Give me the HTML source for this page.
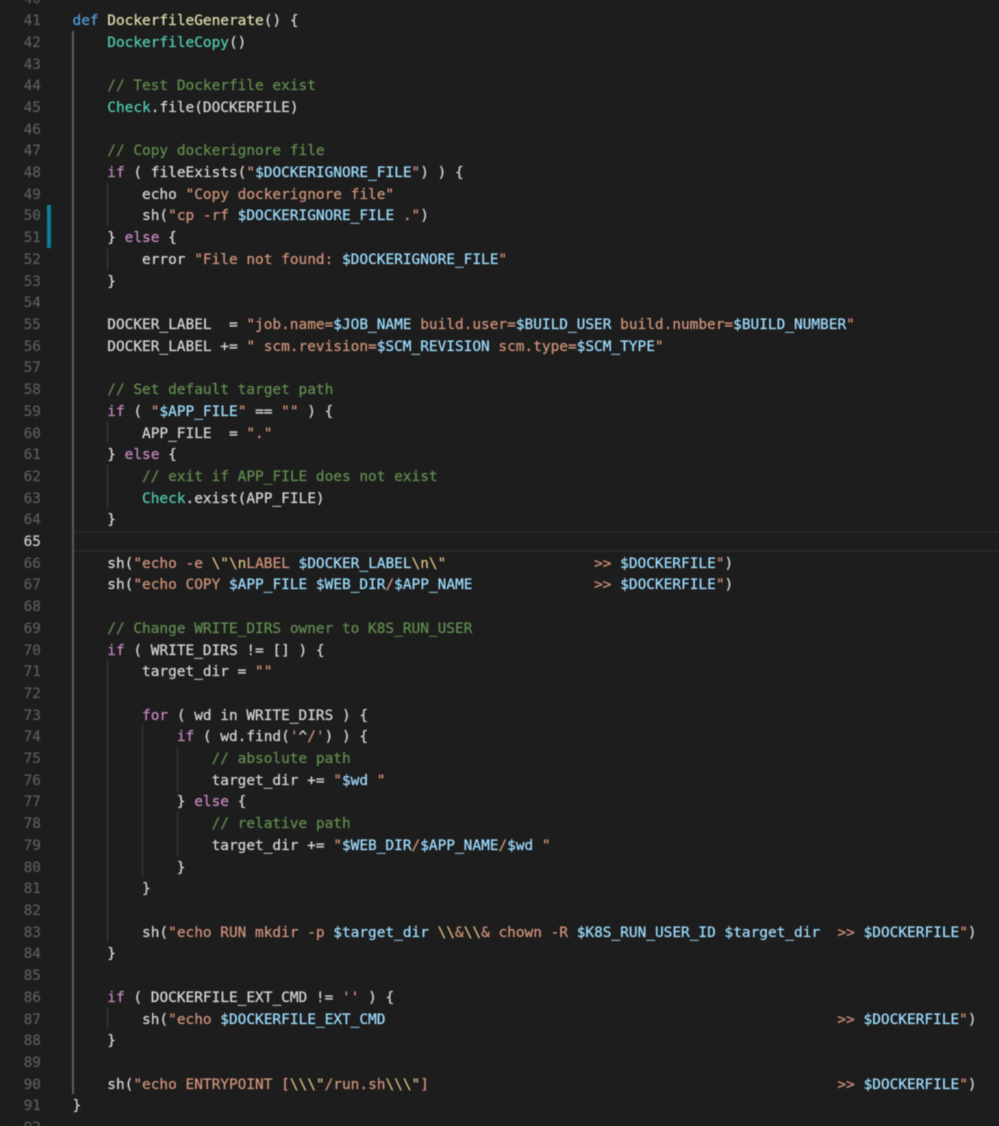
<!DOCTYPE html>
<html><head><meta charset="utf-8"><style>
html,body{margin:0;padding:0;background:#1d1d1d}
#e{position:relative;width:999px;height:1126px;overflow:hidden;background:#1d1d1d;filter:blur(.4px)}
pre{position:absolute;margin:0;font:14.45px/21.7px "DejaVu Sans Mono","Liberation Mono",monospace;top:-10.55px;font-variant-ligatures:none;-webkit-text-stroke:.25px}
#n{left:0;width:41px;text-align:right;color:#5a5a5a}
#n b{font-weight:normal;color:#c6c6c6}
#c{left:72.5px;color:#d4d4d4}
.g{position:absolute;width:1px;background:#404040}
.k{color:#569cd6}.p{color:#c586c0}.f{color:#dcdcaa}.t{color:#4ec9b0}.v{color:#9cdcfe}.s{color:#ce9178}.m{color:#608b4e}.x{color:#d7ba7d}
</style></head><body><div id="e">
<div style="position:absolute;left:74px;right:0;top:531px;height:21px;border-top:2px solid #272727;border-bottom:2px solid #272727;box-sizing:border-box"></div>
<div style="position:absolute;left:47px;top:205px;width:4px;height:43px;background:#0c7d9d"></div>
<div class="g" style="left:72px;top:31px;height:1063px;width:2px;background:#5c5c5c"></div>
<div class="g" style="left:107px;top:183px;height:43px"></div>
<div class="g" style="left:107px;top:248px;height:22px"></div>
<div class="g" style="left:107px;top:421px;height:22px"></div>
<div class="g" style="left:107px;top:465px;height:43px"></div>
<div class="g" style="left:107px;top:660px;height:282px"></div>
<div class="g" style="left:107px;top:1007px;height:22px"></div>
<div class="g" style="left:142px;top:725px;height:152px"></div>
<div class="g" style="left:177px;top:747px;height:44px"></div>
<div class="g" style="left:177px;top:812px;height:44px"></div>
<pre id="n">40
41
42
43
44
45
46
47
48
49
50
51
52
53
54
55
56
57
58
59
60
61
62
63
64
<b>65</b>
66
67
68
69
70
71
72
73
74
75
76
77
78
79
80
81
82
83
84
85
86
87
88
89
90
91
92</pre>
<pre id="c">

<span class="k">def</span> <span class="f">DockerfileGenerate</span>() {
    <span class="t">DockerfileCopy</span>()

    <span class="m">// Test Dockerfile exist</span>
    <span class="t">Check</span>.file(DOCKERFILE)

    <span class="m">// Copy dockerignore file</span>
    <span class="p">if</span> ( fileExists(<span class="s">"</span><span class="v">$DOCKERIGNORE_FILE</span><span class="s">"</span>) ) {
        echo <span class="s">"Copy dockerignore file"</span>
        sh(<span class="s">"cp -rf </span><span class="v">$DOCKERIGNORE_FILE</span><span class="s"> ."</span>)
    } <span class="p">else</span> {
        error <span class="s">"File not found: </span><span class="v">$DOCKERIGNORE_FILE</span><span class="s">"</span>
    }

    DOCKER_LABEL  = <span class="s">"job.name=</span><span class="v">$JOB_NAME</span><span class="s"> build.user=</span><span class="v">$BUILD_USER</span><span class="s"> build.number=</span><span class="v">$BUILD_NUMBER</span><span class="s">"</span>
    DOCKER_LABEL += <span class="s">" scm.revision=</span><span class="v">$SCM_REVISION</span><span class="s"> scm.type=</span><span class="v">$SCM_TYPE</span><span class="s">"</span>

    <span class="m">// Set default target path</span>
    <span class="p">if</span> ( <span class="s">"</span><span class="v">$APP_FILE</span><span class="s">"</span> == <span class="s">""</span> ) {
        APP_FILE  = <span class="s">"."</span>
    } <span class="p">else</span> {
        <span class="m">// exit if APP_FILE does not exist</span>
        <span class="t">Check</span>.exist(APP_FILE)
    }

    sh(<span class="s">"echo -e </span><span class="x">\"\n</span><span class="s">LABEL </span><span class="v">$DOCKER_LABEL</span><span class="x">\n\"</span><span class="s">                 &gt;&gt; </span><span class="v">$DOCKERFILE</span><span class="s">"</span>)
    sh(<span class="s">"echo COPY </span><span class="v">$APP_FILE</span><span class="s"> </span><span class="v">$WEB_DIR</span><span class="s">/</span><span class="v">$APP_NAME</span><span class="s">              &gt;&gt; </span><span class="v">$DOCKERFILE</span><span class="s">"</span>)

    <span class="m">// Change WRITE_DIRS owner to K8S_RUN_USER</span>
    <span class="p">if</span> ( WRITE_DIRS != [] ) {
        target_dir = <span class="s">""</span>

        <span class="p">for</span> ( wd in WRITE_DIRS ) {
            <span class="p">if</span> ( wd.find(<span class="s">'</span>^<span class="s">/'</span>) ) {
                <span class="m">// absolute path</span>
                target_dir += <span class="s">"</span><span class="v">$wd</span><span class="s"> "</span>
            } <span class="p">else</span> {
                <span class="m">// relative path</span>
                target_dir += <span class="s">"</span><span class="v">$WEB_DIR</span><span class="s">/</span><span class="v">$APP_NAME</span><span class="s">/</span><span class="v">$wd</span><span class="s"> "</span>
            }
        }

        sh(<span class="s">"echo RUN mkdir -p </span><span class="v">$target_dir</span><span class="s"> </span><span class="x">\\</span><span class="s">&amp;</span><span class="x">\\</span><span class="s">&amp; chown -R </span><span class="v">$K8S_RUN_USER_ID</span><span class="s"> </span><span class="v">$target_dir</span><span class="s">  &gt;&gt; </span><span class="v">$DOCKERFILE</span><span class="s">"</span>)
    }

    <span class="p">if</span> ( DOCKERFILE_EXT_CMD != <span class="s">''</span> ) {
        sh(<span class="s">"echo </span><span class="v">$DOCKERFILE_EXT_CMD</span><span class="s">                                                    &gt;&gt; </span><span class="v">$DOCKERFILE</span><span class="s">"</span>)
    }

    sh(<span class="s">"echo ENTRYPOINT [</span><span class="x">\\\"</span><span class="s">/run.sh</span><span class="x">\\\"</span><span class="s">]                                               &gt;&gt; </span><span class="v">$DOCKERFILE</span><span class="s">"</span>)
}
</pre>
</div></body></html>
